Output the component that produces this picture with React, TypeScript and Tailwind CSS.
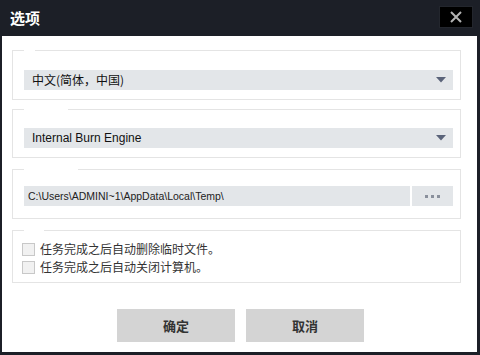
import React from 'react';

const cjk = { fontFamily: '"Noto Sans CJK SC", "Liberation Sans", sans-serif' };
const latin = { fontFamily: '"Liberation Sans", Arial, "Noto Sans CJK SC", sans-serif' };

function Group({
  height,
  gap,
  padTop,
  children,
}: {
  height: string;
  gap: string;
  padTop: string;
  children: React.ReactNode;
}) {
  return (
    <div className={`relative w-[449px] border border-[#e4e4e4] ${height} ${padTop}`}>
      {/* legend gap */}
      <span className={`absolute -top-px left-[11px] h-px bg-white ${gap}`} />
      {children}
    </div>
  );
}

function Select({ label, chinese }: { label: string; chinese?: boolean }) {
  return (
    <div className="ml-[11px] flex h-[20px] w-[429px] items-center justify-between bg-[#e3e6e9] pl-[8px] pr-[7px]">
      <span className="text-[12px] leading-none text-[#111]" style={chinese ? cjk : latin}>
        {label}
      </span>
      <svg width="10" height="6" viewBox="0 0 10 6">
        <path d="M0 0 H10 L5 5.5 Z" fill="#5a6379" />
      </svg>
    </div>
  );
}

function Check({ label }: { label: string }) {
  return (
    <div className="flex h-[18px] items-center">
      <span className="ml-[9px] h-[13px] w-[13px] border border-[#c8c8c8] bg-[#f1f1f1]" />
      <span className="ml-[5px] text-[12px] leading-none text-[#333]" style={cjk}>
        {label}
      </span>
    </div>
  );
}

export default function App() {
  return (
    <div className="flex h-[355px] w-[480px] flex-col bg-[#1c1f27]">
      {/* Title bar */}
      <div className="flex h-[36px] items-center justify-between pl-[10px] pr-[7px]">
        <span className="text-[15px] font-bold text-white" style={cjk}>
          选项
        </span>
        <button className="mb-[2px] flex h-[22px] w-[34px] items-center justify-center border border-[#23262d] bg-black">
          <svg width="12" height="12" viewBox="0 0 12 12">
            <path d="M1 1 L11 11 M11 1 L1 11" stroke="#b4b4b4" strokeWidth="2" />
          </svg>
        </button>
      </div>

      {/* Body */}
      <div className="mb-[3px] ml-[2px] mr-[3px] flex flex-1 flex-col bg-white pl-[10px] pt-[14px]">
        <Group height="h-[50px]" gap="w-[11px]" padTop="pt-[19px]">
          <Select label="中文(简体，中国)" chinese />
        </Group>

        <div className="mt-[9px]">
          <Group height="h-[49px]" gap="w-[44px]" padTop="pt-[18px]">
            <Select label="Internal Burn Engine" />
          </Group>
        </div>

        <div className="mt-[11px]">
          <Group height="h-[50px]" gap="w-[54px]" padTop="pt-[16px]">
            <div className="ml-[11px] flex h-[20px] w-[429px] gap-[2px]">
              <div className="flex flex-1 items-center bg-[#e3e6e9] pl-[4px]">
                <span className="text-[10.5px] leading-none text-[#222]" style={latin}>
                  C:\Users\ADMINI~1\AppData\Local\Temp\
                </span>
              </div>
              <div className="flex w-[41px] items-center justify-center gap-[3px] bg-[#e3e6e9]">
                <span className="h-[3px] w-[3px] bg-[#8a909c]" />
                <span className="h-[3px] w-[3px] bg-[#8a909c]" />
                <span className="h-[3px] w-[3px] bg-[#8a909c]" />
              </div>
            </div>
          </Group>
        </div>

        <div className="mt-[11px]">
          <Group height="h-[53px]" gap="w-[20px]" padTop="pt-[9px]">
            <Check label="任务完成之后自动删除临时文件。" />
            <Check label="任务完成之后自动关闭计算机。" />
          </Group>
        </div>

        {/* Buttons */}
        <div className="mt-[26px] flex gap-[11px] pl-[105px]">
          <button
            className="h-[33px] w-[118px] bg-[#d4d4d4] text-[13px] font-bold text-[#333]"
            style={cjk}
          >
            确定
          </button>
          <button
            className="h-[33px] w-[118px] bg-[#d4d4d4] text-[13px] font-bold text-[#333]"
            style={cjk}
          >
            取消
          </button>
        </div>
      </div>
    </div>
  );
}
